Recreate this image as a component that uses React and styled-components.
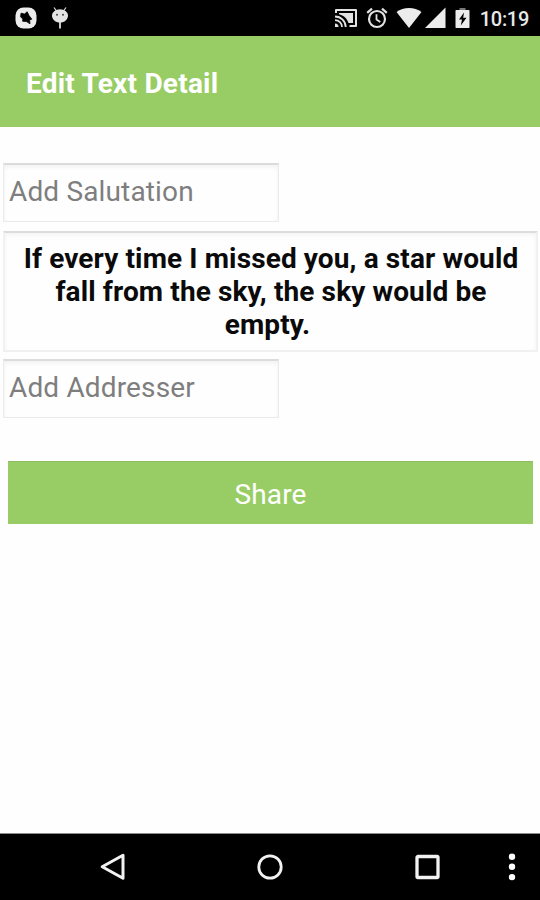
import React from "react";
import styled, { createGlobalStyle } from "styled-components";

const App = () => {
  return (
    <Screen>
      <GlobalStyle />
      <StatusBar>
        <NotificationIcons>
          <BirdIcon />
          <DroidIcon />
        </NotificationIcons>
        <CastIcon />
        <AlarmIcon />
        <WifiIcon />
        <SignalIcon />
        <BatteryIcon />
        <Clock>10:19</Clock>
      </StatusBar>
      <Header>
        <Title>Edit Text Detail</Title>
      </Header>
      <Form>
        <TextField placeholder="Add Salutation" aria-label="Salutation" />
        <Message>
          If every time I missed you, a star would fall from the sky, the sky
          would be empty.&nbsp;
        </Message>
        <TextField placeholder="Add Addresser" aria-label="Addresser" />
        <ShareButton>Share</ShareButton>
      </Form>
      <NavBar>
        <NavButton $width={142} aria-label="Back">
          <svg width="28" height="30" viewBox="0 0 28 30">
            <path d="M24 3.2V26.2L3.2 14.7Z" fill="none" stroke="#f2f2f2" strokeWidth="3" strokeLinejoin="round" />
          </svg>
        </NavButton>
        <NavButton $width={172} aria-label="Home">
          <svg width="28" height="28" viewBox="0 0 28 28">
            <circle cx="14" cy="14" r="11.2" fill="none" stroke="#f2f2f2" strokeWidth="2.8" />
          </svg>
        </NavButton>
        <NavButton $width={142} aria-label="Recent apps">
          <svg width="28" height="28" viewBox="0 0 28 28">
            <rect x="4" y="3.5" width="21" height="21" rx="1" fill="none" stroke="#f2f2f2" strokeWidth="3.3" />
          </svg>
        </NavButton>
        <NavButton $width={28} aria-label="Menu">
          <svg width="10" height="30" viewBox="0 0 10 30">
            <circle cx="5" cy="4.7" r="3.2" fill="#fff" />
            <circle cx="5" cy="14.8" r="3.2" fill="#fff" />
            <circle cx="5" cy="25.1" r="3.2" fill="#fff" />
          </svg>
        </NavButton>
      </NavBar>
    </Screen>
  );
};

export default App;

const BirdIcon = () => (
  <svg width="22" height="22" viewBox="0 0 22 22">
    <rect x="0.5" y="0.5" width="21" height="21" rx="8" fill="#ececec" />
    <path d="M6 6.2L9.5 7L12.2 4.8L13.8 8.2L16.8 12.2L14.6 12.8L15 16.8L11.5 14.6L7.6 14.2L7.8 12L5.6 9.8Z" fill="#000" stroke="#000" strokeWidth="0.8" strokeLinejoin="round" />
  </svg>
);

const DroidIcon = () => (
  <svg width="18" height="22" viewBox="0 0 18 22">
    <path d="M3 0.5L5.5 4M15 0.5L12.5 4" stroke="#ddd" strokeWidth="1.2" />
    <path d="M1 8.5C1 5 5 2.2 9 2.2S17 5 17 8.5C17 12.5 13.5 15.6 9 15.6S1 12.5 1 8.5Z" fill="#e4e4e4" />
    <path d="M9 15V21.5" stroke="#ddd" strokeWidth="1.8" />
    <circle cx="6" cy="7.8" r="1" fill="#444" />
    <circle cx="12" cy="7.8" r="1" fill="#444" />
  </svg>
);

const CastIcon = () => (
  <svg width="24" height="20" viewBox="0 0 24 20">
    <path d="M2 5V2H22V18H15.5" fill="none" stroke="#e2e2e2" strokeWidth="2" strokeLinejoin="round" />
    <path d="M5 5H19V15H14.5C13.2 10.5 9.5 7.2 5 6.2Z" fill="#e2e2e2" />
    <path d="M1 8.5C7 8.5 11.7 13.2 11.7 19M1 12.2C5 12.2 8 15.2 8 19" fill="none" stroke="#e2e2e2" strokeWidth="1.8" />
    <path d="M1 15.5A3.5 3.5 0 0 1 4.5 19H1Z" fill="#e2e2e2" />
  </svg>
);

const AlarmIcon = () => (
  <svg width="22" height="22" viewBox="0 0 22 22">
    <circle cx="11" cy="12" r="8" fill="none" stroke="#e2e2e2" strokeWidth="2.2" />
    <path d="M1.2 5.8L6 1.7M20.8 5.8L16 1.7" stroke="#e2e2e2" strokeWidth="2.2" />
    <path d="M10.5 7.2V12.5L14.3 15" fill="none" stroke="#e2e2e2" strokeWidth="1.8" />
  </svg>
);

const WifiIcon = () => (
  <svg width="26" height="22" viewBox="0 0 26 22">
    <path d="M0.5 5C7.5 -0.5 18.5 -0.5 25.5 5L13 21Z" fill="#ececec" />
  </svg>
);

const SignalIcon = () => (
  <svg width="21" height="22" viewBox="0 0 21 22">
    <path d="M20.5 0.5V21H0Z" fill="#ececec" />
  </svg>
);

const BatteryIcon = () => (
  <svg width="15" height="22" viewBox="0 0 15 22">
    <path d="M4.5 1H10.5V3H4.5Z" fill="#777" />
    <rect x="0.5" y="3" width="14" height="18" rx="0.8" fill="#ececec" />
    <path d="M9 5.5L4 12.6H7L5.8 18.5L11.5 10.8H8.2Z" fill="#000" />
  </svg>
);

const GlobalStyle = createGlobalStyle`
* {
  box-sizing: border-box;
}
body {
  margin: 0;
  background: #fefefe;
  font-family: Roboto, sans-serif;
}
`;

const Screen = styled.div`
display: flex;
flex-direction: column;
width: 540px;
height: 900px;
overflow: hidden;
`;

const StatusBar = styled.div`
display: flex;
align-items: center;
height: 36px;
padding-right: 11px;
background: #000;
svg {
  display: block;
  flex: none;
}
svg + svg {
  margin-left: 8px;
}
svg:nth-of-type(4) {
  margin-left: 3px;
}
svg:nth-of-type(5) {
  margin-left: 9px;
}
`;

const NotificationIcons = styled.div`
display: flex;
flex: 1;
padding-left: 15px;
&& svg + svg {
  margin-left: 14px;
}
`;

const Clock = styled.span`
margin: 2px 0 0 10px;
color: #e8e8e8;
font-size: 20px;
font-weight: 500;
letter-spacing: -0.3px;
line-height: 24px;
`;

const Header = styled.header`
display: flex;
align-items: center;
height: 91px;
padding: 4px 0 0 26px;
background: #98cd65;
`;

const Title = styled.h1`
margin: 0;
color: #fff;
font-size: 28px;
font-weight: 700;
letter-spacing: 0.22px;
line-height: 34px;
`;

const Form = styled.main`
display: flex;
flex: 1;
flex-direction: column;
align-items: flex-start;
padding: 36px 2px 0 3px;
`;

const TextField = styled.input`
width: 276px;
height: 59px;
padding: 0 5px 4px;
border: 1px solid #ebebeb;
border-top: 2px solid #dcdcdc;
border-radius: 0;
outline: none;
background: #fefefe;
box-shadow: inset 0 2px 4px #f1f1f1;
color: #000;
font-family: inherit;
font-size: 28px;
letter-spacing: 0.15px;
&::placeholder {
  color: #7e7e7e;
  opacity: 1;
}
`;

const Message = styled.div`
width: 535px;
height: 121px;
margin: 9px 0 7px;
padding: 9px 11px 0 12px;
border: 2px solid #f1f1f1;
border-top-color: #dcdcdc;
background: #fefefe;
box-shadow: inset 0 2px 4px #f3f3f3;
color: #0a0a0a;
font-size: 28px;
font-weight: 700;
letter-spacing: 0.12px;
line-height: 33px;
text-align: center;
`;

const ShareButton = styled.button`
width: 525px;
height: 63px;
margin: 43px 0 0 5px;
padding: 3px 0 0;
border: none;
background: #98cd65;
box-shadow: inset 0 1px #8dbd60;
color: #fff;
font-family: inherit;
font-size: 28px;
letter-spacing: 0.1px;
`;

const NavBar = styled.nav`
display: flex;
height: 67px;
padding-left: 42px;
border-top: 1px solid #8a8a8a;
background: #000;
`;

const NavButton = styled.button`
display: flex;
flex: none;
align-items: center;
justify-content: center;
width: ${({ $width }) => $width}px;
padding: 0;
border: none;
background: none;
`;
